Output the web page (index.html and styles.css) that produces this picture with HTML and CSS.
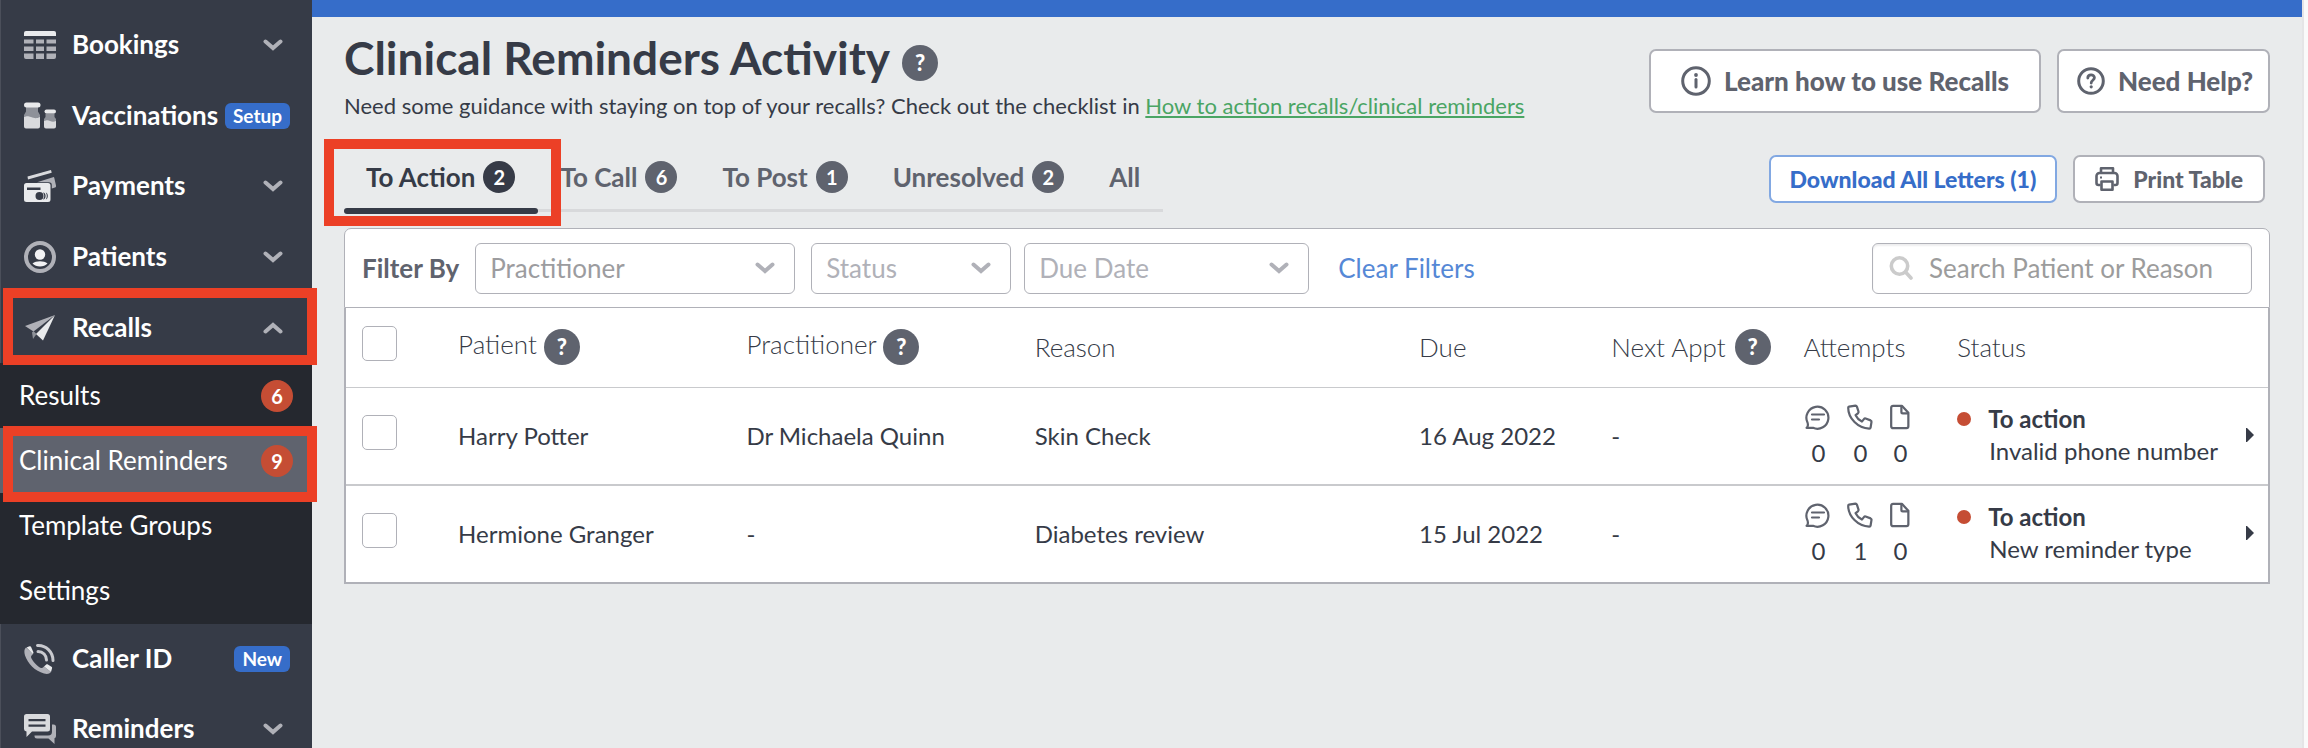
FILE: index.html
```html
<!DOCTYPE html>
<html lang="en">
<head>
<meta charset="utf-8">
<title>Clinical Reminders Activity</title>
<link rel="stylesheet" href="styles.css">
</head>
<body>
<svg class="sprite" aria-hidden="true">
  <symbol id="chevron" viewBox="0 0 20 12"><path d="M2.5 2.5 10 9l7.500-6.500" fill="none" stroke="currentColor" stroke-width="4" stroke-linecap="round" stroke-linejoin="miter"/></symbol>
  <symbol id="chat" viewBox="0 0 26 26"><path d="M2.500 18.500A11 11 0 1 1 8 23.800H1.500c1.500-1 2-2 1-5.300" fill="none" stroke="currentColor" stroke-width="2.200" stroke-linecap="round" stroke-linejoin="round"/><path d="M7 10.500h12M7 15.500h7" stroke="currentColor" stroke-width="2.200" stroke-linecap="round"/></symbol>
  <symbol id="phone" viewBox="0 0 26 26"><path d="M2 2.600 8.500 1.600c.8 0 1.200.4 1.500 1.200l1.500 4.800c.2.700 0 1.200-.6 1.700L8.600 11.200c1.400 2.900 3.500 5 6.300 6.400l2-2.500c.5-.6 1-.8 1.700-.6l5 1.900c.7.300 1 .8.900 1.500l-.9 5.600c-.1.800-.6 1.200-1.400 1.200C11 24.200 1.200 14.500 1.200 3.800c0-.7.200-1.100.8-1.200z" fill="none" stroke="currentColor" stroke-width="2.200" stroke-linejoin="round"/></symbol>
  <symbol id="doc" viewBox="0 0 22 28"><path d="M3.500 2H13l7 7.500v14.500a2 2 0 0 1-2 2H3.500a2 2 0 0 1-2-2V4a2 2 0 0 1 2-2z" fill="none" stroke="currentColor" stroke-width="2.400" stroke-linejoin="round"/><path d="M12.500 2.500v6a1.500 1.500 0 0 0 1.500 1.500h5.500" fill="none" stroke="currentColor" stroke-width="2.400"/></symbol>
</svg>
<div class="app">
  <nav class="sidebar" aria-label="Main">
    <div class="nav-group nav-group-top">
      <a class="nav-item" href="#">
        <svg class="nav-icon" viewBox="0 0 32 32"><path d="M0 4a2 2 0 0 1 2-2h28a2 2 0 0 1 2 2v3H0z" fill="#e9eaec"/><path d="M0 10.500h9.500v4H0zM12 10.500h8v4h-8zM22.500 10.500H32v4h-9.500zM0 17.500h9.500v4.500H0zM12 17.500h8v4.500h-8zM22.500 17.500H32v4.500h-9.500zM0 24.500h9.500V30H2a2 2 0 0 1-2-2zM12 24.500h8V30h-8zM22.500 24.500H32V28a2 2 0 0 1-2 2h-7.500z" fill="#b0b1b8"/></svg>
        <span class="nav-label">Bookings</span><svg class="nav-chevron"><use href="#chevron"/></svg>
      </a>
      <a class="nav-item" href="#">
        <svg class="nav-icon" viewBox="0 0 32 32"><path d="M2 7h12v4.500l2 3.500v4H0v-4l2-3.500zM21.500 13.500h9V17l1.500 2v4H20v-4l1.500-2z" fill="#8e9199"/><rect y="2.500" width="16.500" height="5" rx="2.500" fill="#e9eaec"/><rect x="20.500" y="9.500" width="11.500" height="4" rx="2" fill="#e9eaec"/><path d="M0 17c3-1 4-1 7 0s5 2 9 0v9.500a2 2 0 0 1-2 2H2a2 2 0 0 1-2-2zM20 21c3-1 4-1 6 0s4 1 6 0v5.500a2 2 0 0 1-2 2h-8a2 2 0 0 1-2-2z" fill="#d9dadd"/></svg>
        <span class="nav-label">Vaccinations</span><span class="tag">Setup</span>
      </a>
      <a class="nav-item" href="#">
        <svg class="nav-icon" viewBox="0 0 32 32"><path d="M3.500 6.500 26 .2a1 1 0 0 1 1.300.8l.4 1.700L4 9.500z" fill="#d9dadd"/><path d="M13 12.200 29 7.200a1 1 0 0 1 1.300.8L32 15.500c.2 1-.2 1.600-1 2l-3.200 1V15c0-2-1-2.800-3-2.800z" fill="#b0b1b8"/><path fill-rule="evenodd" d="M2.500 13H24a2.500 2.500 0 0 1 2.500 2.500V29.500A2.500 2.500 0 0 1 24 32H2.500A2.500 2.500 0 0 1 0 29.500v-14A2.500 2.500 0 0 1 2.500 13zM3 17.500V20h13.500v-2.500zM15.500 22a4 4 0 1 0 0 8 4 4 0 0 0 0-8zM19 22.500c1.700 2 1.700 5 0 7 1.600 0 2.600-1.600 2.600-3.500S20.600 22.500 19 22.500zM21.800 22.500c1.400 2 1.400 5 0 7 1.300-.4 2-1.800 2-3.500s-.7-3-2-3.500z" fill="#e9eaec"/></svg>
        <span class="nav-label">Payments</span><svg class="nav-chevron"><use href="#chevron"/></svg>
      </a>
      <a class="nav-item" href="#">
        <svg class="nav-icon" viewBox="0 0 32 32"><circle cx="16" cy="16" r="14" fill="none" stroke="#b0b1b8" stroke-width="4"/><circle cx="16" cy="13.500" r="5.200" fill="#f2f2f4"/><path d="M8.500 22.500c3.500-3 11.500-3 15 0-3.500 4-11.500 4-15 0z" fill="#f2f2f4"/></svg>
        <span class="nav-label">Patients</span><svg class="nav-chevron"><use href="#chevron"/></svg>
      </a>
      <a class="nav-item nav-item-open" href="#" aria-expanded="true">
        <svg class="nav-icon" viewBox="0 0 32 32"><path d="M1 14 31 3 9.500 19.500z" fill="#b0b1b8"/><path d="M8 20.500 9.500 19 12.500 22 9 27z" fill="#8e9199"/><path d="M31 3 19 28.500 12 22z" fill="#e9eaec"/></svg>
        <span class="nav-label">Recalls</span><svg class="nav-chevron nav-chevron-up"><use href="#chevron"/></svg>
      </a>
    </div>
    <div class="subnav">
      <a class="sub-item" href="#"><span class="nav-label">Results</span><span class="alert">6</span></a>
      <a class="sub-item sub-item-current" href="#" aria-current="page"><span class="nav-label">Clinical Reminders</span><span class="alert">9</span></a>
      <a class="sub-item" href="#"><span class="nav-label">Template Groups</span></a>
      <a class="sub-item" href="#"><span class="nav-label">Settings</span></a>
    </div>
    <div class="nav-group nav-group-bottom">
      <a class="nav-item" href="#">
        <svg class="nav-icon" viewBox="0 0 32 32"><path d="M2 4.500C0 6 0 9 1 12.500 4 21 11 28 20 30.500c3 .8 5.500.5 7-1.500l-7-5.500c-2 2-3 2-5 .5-3.500-2.800-5.500-5-7.500-8.500C6.500 13.500 7 13 9 11z" fill="#b0b1b8"/><path d="m2.500 4.500 3-1.200c.8-.3 1.300 0 1.600.7L9.300 9c.3.800.1 1.400-.5 2zM20 23.500l2-1.700c.6-.5 1.200-.6 1.900-.2l3.500 2.200c.7.400.9 1 .6 1.700L27 29z" fill="#e9eaec"/><path d="M13.500 2.500C22 2 29 9 29 17.500M14 8.500c5 0 8.500 4 8.500 8.500" fill="none" stroke="#c9cacf" stroke-width="3" stroke-linecap="round"/></svg>
        <span class="nav-label">Caller ID</span><span class="tag">New</span>
      </a>
      <a class="nav-item" href="#">
        <svg class="nav-icon" viewBox="0 0 32 32"><path d="M28 11.500h1.500A2.500 2.500 0 0 1 32 14v9a2.500 2.500 0 0 1-1.500 2.300V31l-6-5.500H13a2.500 2.500 0 0 1-2.500-2.500v-.5H24c3 0 4-1.500 4-4z" fill="#b0b1b8"/><path fill-rule="evenodd" d="M3 1h20.500a2.500 2.500 0 0 1 2.500 2.500V16a2.500 2.500 0 0 1-2.500 2.500H8L2.500 24v-5.600A2.500 2.500 0 0 1 0 16V3.500A2.500 2.500 0 0 1 3 1zM4.500 6v2.200h17V6zM4.500 11.500v2.200h17v-2.200z" fill="#d9dadd"/></svg>
        <span class="nav-label">Reminders</span><svg class="nav-chevron"><use href="#chevron"/></svg>
      </a>
    </div>
  </nav>

  <main class="main">
    <div class="topbar"></div>
    <div class="content">
      <header class="page-head">
        <div>
          <h1 class="title">Clinical Reminders Activity <button class="help" type="button" aria-label="About this page">?</button></h1>
          <p class="subtitle">Need some guidance with staying on top of your recalls? Check out the checklist in <a href="#">How to action recalls/clinical reminders</a></p>
        </div>
        <div class="head-actions">
          <button class="btn btn-learn" type="button">
            <svg width="30" height="30" viewBox="0 0 30 30"><circle cx="15" cy="15" r="13.300" fill="none" stroke="currentColor" stroke-width="3"/><circle cx="15" cy="9" r="1.900" fill="currentColor"/><path d="M15 13.500v7.500" stroke="currentColor" stroke-width="3" stroke-linecap="round"/></svg>
            Learn how to use Recalls
          </button>
          <button class="btn btn-help" type="button">
            <svg width="28" height="28" viewBox="0 0 28 28"><circle cx="14" cy="14" r="12.300" fill="none" stroke="currentColor" stroke-width="3"/><path d="M10.800 11c0-4 6.600-4 6.600-.2 0 2.500-3.200 2.400-3.200 5.200" fill="none" stroke="currentColor" stroke-width="2.800" stroke-linecap="round"/><circle cx="14.200" cy="19.800" r="1.600" fill="currentColor"/></svg>
            Need Help?
          </button>
        </div>
      </header>

      <div class="toolbar">
        <div class="tabs" role="tablist">
          <button class="tab tab-active" role="tab" aria-selected="true">To Action <span class="count">2</span></button>
          <button class="tab" role="tab">To Call <span class="count">6</span></button>
          <button class="tab" role="tab">To Post <span class="count">1</span></button>
          <button class="tab" role="tab">Unresolved <span class="count">2</span></button>
          <button class="tab" role="tab">All</button>
        </div>
        <div class="tool-actions">
          <button class="btn btn-small btn-download" type="button">Download All Letters (1)</button>
          <button class="btn btn-small btn-print" type="button">
            <svg width="24" height="24" viewBox="0 0 24 24" fill="none" stroke="currentColor" stroke-width="2.600" stroke-linejoin="round"><path d="M6 6V1.300h12V6M5.500 18H3.500a2 2 0 0 1-2-2V9a3 3 0 0 1 3-3h15a3 3 0 0 1 3 3v7a2 2 0 0 1-2 2h-2"/><path d="M6.500 14.500h11v8.200h-11z"/><path d="M5 10.500h2" stroke-width="2"/></svg>
            Print Table
          </button>
        </div>
      </div>

      <section class="panel">
        <form class="filters">
          <span class="filter-label">Filter By</span>
          <div class="pick pick-practitioner"><select aria-label="Practitioner"><option>Practitioner</option></select><svg class="pick-chevron"><use href="#chevron"/></svg></div>
          <div class="pick pick-status"><select aria-label="Status"><option>Status</option></select><svg class="pick-chevron"><use href="#chevron"/></svg></div>
          <div class="pick pick-due"><select aria-label="Due Date"><option>Due Date</option></select><svg class="pick-chevron"><use href="#chevron"/></svg></div>
          <button class="clear" type="reset">Clear Filters</button>
          <label class="search">
            <svg width="24" height="24" viewBox="0 0 24 24" fill="none" stroke="currentColor" stroke-width="3.600" stroke-linecap="round"><circle cx="10.500" cy="10" r="8.200"/><path d="m16.500 16 5.500 6"/></svg>
            <input type="search" placeholder="Search Patient or Reason" aria-label="Search Patient or Reason">
          </label>
        </form>
        <table class="table">
          <colgroup><col class="c-check"><col class="c-name"><col class="c-name"><col class="c-reason"><col class="c-date"><col class="c-date"><col class="c-attempts"><col class="c-status"></colgroup>
          <thead>
            <tr>
              <th><input class="check" type="checkbox" aria-label="Select all"></th>
              <th>Patient <button class="help help-inline" type="button" aria-label="About Patient">?</button></th>
              <th>Practitioner <button class="help help-inline" type="button" aria-label="About Practitioner">?</button></th>
              <th>Reason</th>
              <th>Due</th>
              <th><div class="th-flex">Next Appt <button class="help" type="button" aria-label="About Next Appt">?</button></div></th>
              <th>Attempts</th>
              <th>Status</th>
            </tr>
          </thead>
          <tbody>
            <tr>
              <td><input class="check" type="checkbox" aria-label="Select Harry Potter"></td>
              <td>Harry Potter</td>
              <td>Dr Michaela Quinn</td>
              <td>Skin Check</td>
              <td>16 Aug 2022</td>
              <td>-</td>
              <td><div class="attempts">
                <span class="attempt"><svg class="a-icon"><use href="#chat"/></svg>0</span>
                <span class="attempt"><svg class="a-icon"><use href="#phone"/></svg>0</span>
                <span class="attempt"><svg class="a-icon a-doc"><use href="#doc"/></svg>0</span>
              </div></td>
              <td><div class="status"><span class="dot"></span><div class="status-text"><strong>To action</strong><span>Invalid phone number</span></div><svg class="arrow" viewBox="0 0 8 14"><path d="M0 0h1l7 7-7 7H0z"/></svg></div></td>
            </tr>
            <tr>
              <td><input class="check" type="checkbox" aria-label="Select Hermione Granger"></td>
              <td>Hermione Granger</td>
              <td>-</td>
              <td>Diabetes review</td>
              <td>15 Jul 2022</td>
              <td>-</td>
              <td><div class="attempts">
                <span class="attempt"><svg class="a-icon"><use href="#chat"/></svg>0</span>
                <span class="attempt"><svg class="a-icon"><use href="#phone"/></svg>1</span>
                <span class="attempt"><svg class="a-icon a-doc"><use href="#doc"/></svg>0</span>
              </div></td>
              <td><div class="status"><span class="dot"></span><div class="status-text"><strong>To action</strong><span>New reminder type</span></div><svg class="arrow" viewBox="0 0 8 14"><path d="M0 0h1l7 7-7 7H0z"/></svg></div></td>
            </tr>
          </tbody>
        </table>
      </section>
    </div>
  </main>
</div>
</body>
</html>
```
FILE: styles.css
```css
* { box-sizing: border-box; }

body {
  margin: 0;
  font-family: Lato, "Liberation Sans", sans-serif;
  font-size: 24px;
  color: #363b47;
  background: #e9ebec;
}

button, input, select { font: inherit; color: inherit; }
button { border: 0; background: none; padding: 0; cursor: pointer; }

.sprite { display: none; }

.app {
  display: flex;
  height: 100vh;
  overflow: hidden;
}

/* Sidebar */
.sidebar {
  position: relative;
  z-index: 1;
  flex: none;
  width: 312px;
  background: #363b47;
  box-shadow: inset 1px 0 #4b4f5a;
}

.nav-group { display: grid; }
.nav-group-top { padding-top: 10px; grid-template-rows: repeat(5, 1fr); min-height: 363px; }
.nav-group-bottom { grid-auto-rows: 70px; }

.nav-item {
  position: relative;
  display: flex;
  align-items: center;
  padding: 0 29px 0 24px;
  font-size: 26px;
  font-weight: 700;
  color: #fff;
  text-decoration: none;
}
.nav-label { padding-bottom: 2px; }
.nav-icon { width: 32px; height: 32px; margin-right: 16px; flex: none; }
.nav-chevron { width: 20px; height: 12px; margin-left: auto; color: #b0b1b8; }
.nav-chevron-up { transform: rotate(180deg); }

.tag {
  margin-left: auto;
  margin-right: -7px;
  padding: 0 8px;
  border-radius: 6px;
  background: #366dc9;
  font-size: 19px;
  line-height: 26px;
}

.subnav { position: relative; background: #25282f; padding-bottom: 1px; }
.sub-item {
  position: relative;
  display: flex;
  align-items: center;
  justify-content: space-between;
  height: 65px;
  padding: 0 19px;
  font-size: 26px;
  color: #fff;
  text-decoration: none;
}
.sub-item-current { background: #5f636e; }

.alert {
  width: 32px;
  border-radius: 50%;
  background: #c54d34;
  font-size: 20px;
  font-weight: 700;
  line-height: 32px;
  text-align: center;
}

/* Highlight frames drawn over the page */
.nav-item-open::after,
.sub-item-current::after,
.tab-active::after {
  content: "";
  position: absolute;
  z-index: 2;
  border: 10px solid #ec4026;
  pointer-events: none;
}
.nav-item-open { z-index: 2; }
.nav-item-open::after { inset: -4px -5px -2px 3px; }
.sub-item-current::after { inset: -2px -5px -9px 3px; }
.tab-active::after { inset: -22px -23px -12px -20px; }

/* Main */
.main {
  flex: 1;
  min-width: 0;
  border-right: 4px solid #fafafa;
  box-shadow: inset -2px 0 #e5e5e6;
}
.topbar { height: 17px; margin-right: 2px; background: #366dc9; }
.content { padding: 14px 34px 0 32px; }

.page-head {
  display: flex;
  justify-content: space-between;
  align-items: flex-end;
}
.title {
  display: flex;
  align-items: center;
  gap: 12px;
  margin: 0 0 7px;
  font-size: 46px;
  font-weight: 700;
  line-height: 54px;
}
.title .help { margin-top: 10px; }
.subtitle { margin: 0; font-size: 22px; line-height: 28px; }
.subtitle a { color: #4aa564; }

.help {
  flex: none;
  width: 36px;
  height: 36px;
  border-radius: 50%;
  background: #5f636e;
  color: #fff;
  font-size: 22px;
  font-weight: 900;
  line-height: 36px;
  text-align: center;
}
.help-inline { vertical-align: middle; }

.head-actions { display: flex; gap: 16px; padding-bottom: 7px; }

.btn {
  display: flex;
  align-items: center;
  gap: 13px;
  height: 64px;
  border: 2px solid #b0b1b8;
  border-radius: 7px;
  background: #fff;
  color: #5f636e;
  font-size: 26px;
  font-weight: 900;
}
.btn-learn { padding: 0 30px; }
.btn-help { padding: 0 15px 0 18px; }
.btn-small { height: 48px; font-size: 23px; }
.btn-download { padding: 0 19px; border-color: #82a8e2; color: #366dc9; }
.btn-print { padding: 0 20px; gap: 14px; }

.toolbar {
  display: flex;
  justify-content: space-between;
  align-items: flex-start;
  margin: 35px 0 14px;
}
.tabs {
  display: flex;
  margin-top: 6px;
  background: linear-gradient(#d8d9db, #d8d9db) 0 calc(100% - 2px) / 100% 3px no-repeat;
}
.tab {
  position: relative;
  display: flex;
  align-items: center;
  gap: 8px;
  height: 53px;
  padding: 0 23px 21px 22px;
  font-size: 26px;
  font-weight: 700;
  color: #5f636e;
}
.tab-active { color: #363b47; }
.tab-active::before {
  content: "";
  position: absolute;
  inset: auto 0 0;
  height: 6px;
  border-radius: 3px;
  background: #363b47;
}
.count {
  width: 32px;
  border-radius: 50%;
  background: #5f636e;
  color: #fff;
  font-size: 20px;
  line-height: 32px;
}
.tab-active .count { background: #363b47; }
.tool-actions { display: flex; gap: 16px; padding-right: 5px; }

/* Filters */
.filters {
  display: flex;
  align-items: center;
  padding: 14px 17px 13px;
  border: 1px solid #b0b1b8;
  border-bottom-width: 1px;
  border-radius: 7px 7px 0 0;
  background: #fff;
  font-size: 26px;
}
.filter-label { padding-bottom: 2px; margin-right: 16px; font-weight: 700; color: #5f636e; }
.pick { position: relative; height: 51px; }
.pick select {
  appearance: none;
  width: 100%;
  height: 100%;
  padding: 0 14px 2px;
  border: 1px solid #b0b1b8;
  border-radius: 6px;
  background: #fff;
  color: #b0b1b8;
}
.pick-practitioner { width: 320px; margin-right: 16px; }
.pick-practitioner select { color: #9c9c9f; }
.pick-status { width: 200px; margin-right: 13px; }
.pick-due { width: 285px; margin-right: 29px; }
.pick-chevron {
  position: absolute;
  right: 20px;
  top: 19px;
  width: 20px;
  height: 12px;
  color: #b0b1b8;
  pointer-events: none;
}
.clear { padding-bottom: 2px; color: #5588d6; }
.search {
  display: flex;
  align-items: center;
  gap: 16px;
  width: 380px;
  height: 51px;
  margin-left: auto;
  padding: 0 16px 2px;
  border: 1px solid #b0b1b8;
  border-radius: 6px;
  box-shadow: inset 0 2px 2px #eeeeef;
  color: #cbcbcb;
}
.search svg { flex: none; }
.search input { flex: 1; min-width: 0; padding: 0; border: 0; background: none; outline: 0; color: #363b47; }
.search input::placeholder { color: #9c9c9c; opacity: 1; }

/* Table */
.table {
  width: 100%;
  table-layout: fixed;
  border: 2px solid #b0b1b8;
  border-top: 0;
  border-spacing: 0;
  background: #fff;
}
.c-check { width: 5%; }
.c-name { width: 15%; }
.c-reason { width: 20%; }
.c-date { width: 10%; }
.c-attempts { width: 8%; }
.c-status { width: 17%; }

.table th {
  height: 80px;
  padding: 0 0 2px 16px;
  border-bottom: 1px solid #c9cacd;
  font-size: 26px;
  font-weight: 300;
  text-align: left;
  white-space: nowrap;
}
.table td { height: 96px; padding: 0 0 2px 16px; font-size: 24px; }
.table tbody tr:first-child td { height: 98px; border-bottom: 2px solid #c9cacd; }
.th-flex { display: flex; align-items: center; gap: 9px; }

.check {
  display: block;
  appearance: none;
  width: 35px;
  height: 35px;
  margin: 0 0 6px;
  border: 1px solid #b0b1b8;
  border-radius: 5px;
  background: #fff;
}

.attempts { display: flex; gap: 16px; padding: 2px 0 0 2px; line-height: 30px; }
.attempt { display: flex; flex-direction: column; align-items: center; gap: 8px; }
.a-icon { width: 26px; height: 26px; color: #5f636e; }
.a-doc { width: 22px; }

.status { display: flex; align-items: center; padding-right: 14px; }
.dot {
  align-self: flex-start;
  width: 14px;
  height: 14px;
  margin: 9px 17px 0 0;
  border-radius: 50%;
  background: #c54d34;
}
.status-text { display: flex; flex-direction: column; line-height: 32px; }
.status-text span { padding-left: 1px; }
.arrow { width: 8px; height: 14px; margin-left: auto; fill: #363b47; }
```
